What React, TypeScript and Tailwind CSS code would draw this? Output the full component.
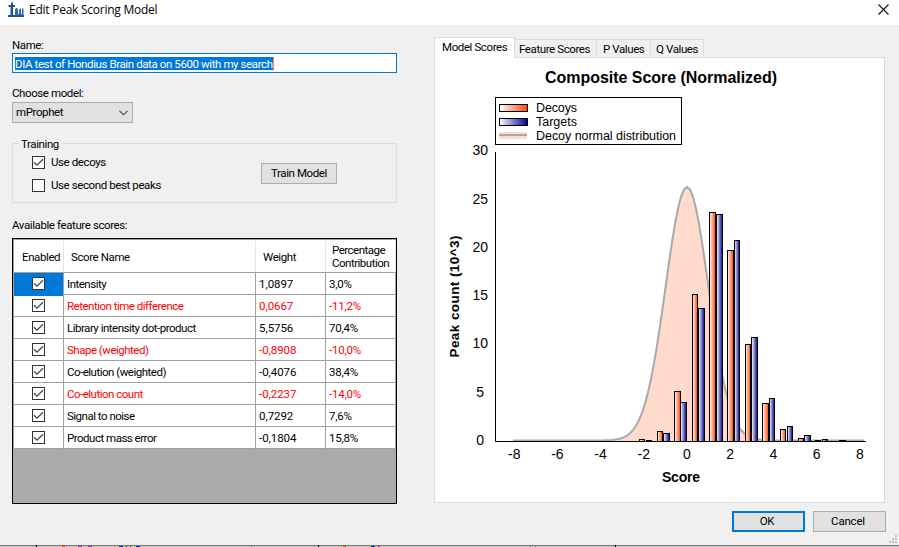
import { ReactNode } from "react";
import clsx from "clsx";

const scores = [
  { name: "Intensity", weight: "1,0897", percent: "3,0%" },
  { name: "Retention time difference", weight: "0,0667", percent: "-11,2%", bad: true },
  { name: "Library intensity dot-product", weight: "5,5756", percent: "70,4%" },
  { name: "Shape (weighted)", weight: "-0,8908", percent: "-10,0%", bad: true },
  { name: "Co-elution (weighted)", weight: "-0,4076", percent: "38,4%" },
  { name: "Co-elution count", weight: "-0,2237", percent: "-14,0%", bad: true },
  { name: "Signal to noise", weight: "0,7292", percent: "7,6%" },
  { name: "Product mass error", weight: "-0,1804", percent: "15,8%" },
];

// [left, width, top] in chart pixels
const decoys = [
  [639, 6, 439], [657, 6, 431], [674, 7, 391], [692, 6, 294], [709, 7, 212], [727, 7, 250],
  [745, 6, 344], [762, 7, 403], [780, 6, 429], [798, 6, 438], [815, 6, 440],
];
const targets = [
  [646, 6, 440], [663, 7, 433], [680, 7, 402], [698, 7, 308], [716, 7, 214], [734, 6, 240],
  [751, 7, 337], [769, 6, 398], [787, 6, 426], [804, 7, 435], [822, 6, 439], [839, 7, 440],
];

const BASE = 441;
const xTicks = [-8, -6, -4, -2, 0, 2, 4, 6, 8];
const yTicks = [0, 5, 10, 15, 20, 25, 30];

function normalCurve() {
  const points: string[] = [];
  for (let x = 513; x <= 864; x += 3) {
    const z = (x - 687) / 21.4;
    points.push(`${x},${(BASE - 0.5 - 253.5 * Math.exp((-z * z) / 2)).toFixed(1)}`);
  }
  return points.join(" ");
}

function CheckBox({ checked }: { checked?: boolean }) {
  return (
    <svg className="block h-[13px] w-[13px] shrink-0" viewBox="0 0 13 13">
      <rect x="0.5" y="0.5" width="12" height="12" fill="#fff" stroke="#333" />
      {checked && <path d="M2 6.2l3 3 6-6" fill="none" stroke="#444" strokeWidth="1.3" />}
    </svg>
  );
}

function Button({ children, primary }: { children: ReactNode; primary?: boolean }) {
  return (
    <button
      className={clsx(
        "h-[21px] w-[73px] bg-[#e1e1e1] pr-[3px] leading-none tracking-[-0.2px]",
        primary ? "border-2 border-[#0078d7]" : "border border-[#adadad]",
      )}
    >
      {children}
    </button>
  );
}

function TitleBar() {
  return (
    <div className="flex h-[25px] justify-between bg-white">
      <div className="flex pl-2">
        <svg className="mt-[2px] h-[15px] w-4" viewBox="0 0 16 15">
          <path d="M0 13h16v2H0z" fill="#1c5590" />
          <path d="M3 0.5h2V3h2v2H5v8.500H2.500V5h-2V3H3z" fill="#1c5590" />
          <path d="M7 13.500V7.500l1-1.500h1l1 1.500v4l1 1V8l1-1.500h1v6l1-1V6.500h1.500v7z" fill="#2c6cad" />
        </svg>
        <span className="ml-[5px] mt-[2px] font-['Open_Sans','Noto_Sans',sans-serif] text-[12px] leading-4 tracking-[-0.25px]">
          Edit Peak Scoring Model
        </span>
      </div>
      <svg className="mr-[10px] mt-1 h-[11px] w-[11px]" viewBox="0 0 11 11">
        <path d="M0.5 0.5l10 10M10.5 0.5l-10 10" stroke="#111" strokeWidth="1.1" />
      </svg>
    </div>
  );
}

function ScoreTable() {
  return (
    <div className="mt-[5px] h-[266px] border border-black bg-[#ababab]">
      <div className="border-l border-t border-[#a0a0a0]">
        <div className="grid h-[33px] grid-cols-[50px_192px_70px_70px] border-b border-[#a0a0a0] bg-white pt-px leading-[13px]">
          <div className="flex items-center border-r border-[#e5e5e5] pl-2 pt-[2px]">Enabled</div>
          <div className="flex items-center border-r border-[#e5e5e5] pl-[7px] pt-[2px]">Score Name</div>
          <div className="flex items-center border-r border-[#e5e5e5] pl-[7px] pt-[2px]">Weight</div>
          <div className="flex items-center border-r border-[#e5e5e5] pl-[6px] tracking-[-0.5px]">
            Percentage
            <br />
            Contribution
          </div>
        </div>
        {scores.map((s, i) => (
          <div
            key={s.name}
            className={clsx(
              "grid h-[22px] grid-cols-[50px_192px_70px_70px] border-b border-[#a0a0a0] bg-white leading-[23px]",
              s.bad && "text-[#f00]",
            )}
          >
            <div className={clsx("border-r border-[#a0a0a0] pl-[18px] pt-1", i === 0 && "bg-[#0078d7]")}>
              <CheckBox checked />
            </div>
            <div className="border-r border-[#a0a0a0] pl-[3px] tracking-[-0.5px]">{s.name}</div>
            <div className="border-r border-[#a0a0a0] pl-[3px] tracking-[-0.05px]">{s.weight}</div>
            <div className="border-r border-[#a0a0a0] pl-[3px] tracking-[-0.2px]">{s.percent}</div>
          </div>
        ))}
      </div>
    </div>
  );
}

function Chart() {
  const curve = normalCurve();
  return (
    <svg className="block h-[444px] w-[449px] font-['Liberation_Sans',Arial,sans-serif] tracking-normal" viewBox="435 58 449 444">
      <defs>
        <linearGradient id="decoy">
          <stop offset="0" stopColor="#fff" />
          <stop offset="1" stopColor="#ff4500" />
        </linearGradient>
        <linearGradient id="target">
          <stop offset="0" stopColor="#fff" />
          <stop offset="1" stopColor="#00008b" />
        </linearGradient>
      </defs>
      <text x="545" y="83" fontSize="16" fontWeight="bold" textLength="232">Composite Score (Normalized)</text>

      {/* distribution */}
      <polygon points={`513,441 ${curve} 864,441`} fill="#ffdacd" />
      <polyline points={curve} fill="none" stroke="#a9a9a9" strokeWidth="2" />

      {/* histogram */}
      {decoys.map(([x, w, y]) => (
        <rect key={x} x={x + 0.5} y={y + 0.5} width={w - 1} height={BASE - y} fill="url(#decoy)" stroke="#000" />
      ))}
      {targets.map(([x, w, y]) => (
        <rect key={x} x={x + 0.5} y={y + 0.5} width={w - 1} height={BASE - y} fill="url(#target)" stroke="#000" />
      ))}

      {/* axes */}
      <path d="M495.5 152V441.5H866" fill="none" stroke="#000" />
      {xTicks.map((t) => (
        <text key={t} x={687 + t * 21.6} y="459" fontSize="14" textAnchor="middle">{t}</text>
      ))}
      {yTicks.map((t) => (
        <text key={t} x={t < 10 ? 484 : 488} y={445 - t * 9.66} fontSize="14" textAnchor="end">{t}</text>
      ))}
      <text x="662" y="482" fontSize="14" fontWeight="bold" textLength="38">Score</text>
      <text transform="translate(459 357.5) rotate(-90)" fontSize="13.5" fontWeight="bold" textLength="122">
        Peak count (10^3)
      </text>

      {/* legend */}
      <rect x="495.5" y="97.5" width="186" height="47" fill="#fff" stroke="#000" />
      <rect x="499.5" y="104.5" width="28" height="7" fill="url(#decoy)" stroke="#000" />
      <rect x="499.5" y="118.5" width="28" height="7" fill="url(#target)" stroke="#000" />
      <rect x="499" y="132" width="28" height="7" fill="#ffdacd" />
      <path d="M499 135h28" stroke="#a9a9a9" strokeWidth="2" />
      <text x="536" y="112" fontSize="12.5" textLength="41">Decoys</text>
      <text x="536" y="126" fontSize="12.5" textLength="41">Targets</text>
      <text x="536" y="140" fontSize="12.5" textLength="140">Decoy normal distribution</text>
    </svg>
  );
}

function Tabs() {
  return (
    <div className="w-[451px]">
      <div className="flex items-end whitespace-nowrap leading-[19px]">
        <div className="relative z-10 -mb-px h-[21px] w-[81px] border border-b-0 border-[#dcdcdc] bg-white pl-[7px]">Model Scores</div>
        <div className="h-[18px] w-[82px] border-r border-t border-[#dcdcdc] pl-1">Feature Scores</div>
        <div className="h-[18px] w-[54px] border-r border-t border-[#dcdcdc] pl-[6px]">P Values</div>
        <div className="h-[18px] w-[53px] border-r border-t border-[#dcdcdc] pl-[5px]">Q Values</div>
      </div>
      <div className="h-[446px] border border-[#dcdcdc] bg-white">
        <Chart />
      </div>
    </div>
  );
}

export default function App() {
  return (
    <div className="flex h-[547px] w-[899px] flex-col overflow-hidden bg-[#f0f0f0] font-[Roboto,'Liberation_Sans',sans-serif] text-[11.5px] tracking-[-0.4px] text-black">
      <TitleBar />
      <div className="flex h-[478px] pl-3">
        <div className="w-[385px] shrink-0">
          <div className="mt-3 h-4 leading-4">Name:</div>
          <div className="flex h-5 items-center border border-[#0078d7] bg-white pl-[2px]">
            <span className="h-[13px] border-r border-[#ff8728] bg-[#0078d7] leading-[14px] text-white">
              DIA test of Hondius Brain data on 5600 with my search
            </span>
          </div>
          <div className="mt-3 h-[17px] leading-[17px]">Choose model:</div>
          <div className="flex h-[21px] w-[121px] items-center justify-between border border-[#adadad] bg-[#e1e1e1] pl-[3px] pr-1">
            mProphet
            <svg className="h-[6px] w-[9px]" viewBox="0 0 9 6">
              <path d="M0.5 0.8l4 4 4-4" fill="none" stroke="#444" strokeWidth="1.1" />
            </svg>
          </div>
          <fieldset className="mt-[13px] flex h-[67px] justify-between border border-[#dcdcdc] pl-[19px] pr-[59px]">
            <legend className="-ml-[13px] h-[15px] px-[2px] leading-4">Training</legend>
            <div>
              <div className="mt-1 flex h-[15px] items-center gap-[6px]">
                <CheckBox checked /> Use decoys
              </div>
              <div className="mt-2 flex h-[15px] items-center gap-[6px]">
                <CheckBox /> Use second best peaks
              </div>
            </div>
            <button className="mt-3 h-[21px] w-[76px] border border-[#adadad] bg-[#e1e1e1]">Train Model</button>
          </fieldset>
          <div className="mt-[14px] h-4 leading-4">Available feature scores:</div>
          <ScoreTable />
        </div>
        <div className="ml-[37px] mt-3">
          <Tabs />
        </div>
      </div>
      <div className="flex h-[42px] justify-end pt-2">
        <div className="flex gap-2">
          <Button primary>OK</Button>
          <Button>Cancel</Button>
        </div>
        <svg className="ml-[3px] mr-[2px] mt-6 h-2 w-2" viewBox="0 0 8 8" fill="#bfbfbf">
          <path d="M6 0h2v2h-2zM3 3h2v2h-2zM6 3h2v2h-2zM0 6h2v2h-2zM3 6h2v2h-2zM6 6h2v2h-2z" />
        </svg>
      </div>
      {/* sliver of the window behind the dialog */}
      <svg className="block h-[2px] w-full shrink-0" viewBox="0 0 899 2" shapeRendering="crispEdges">
        <path d="M0 0h899v1H0z" fill="#777" />
        <path d="M0 1h899v1H0z" fill="#c4c4c4" />
        <path d="M36 0h1v2h-1zM318 0h1v2h-1zM615 0h1v2h-1z" fill="#000" />
        <path d="M251 0h1v2h-1zM530 0h1v2h-1zM535 0h1v2h-1z" fill="#777" />
        <path d="M62 1h3v1h-3zM343 1h3v1h-3z" fill="#b5622c" />
        <path d="M78 1h4v1h-4zM88 1h4v1h-4zM378 1h2v1h-2z" fill="#7a35b5" />
        <path d="M119 1h4v1h-4zM126 1h1v1h-1zM130 1h1v1h-1zM136 1h4v1h-4zM371 1h4v1h-4z" fill="#1a1ac0" />
      </svg>
    </div>
  );
}
